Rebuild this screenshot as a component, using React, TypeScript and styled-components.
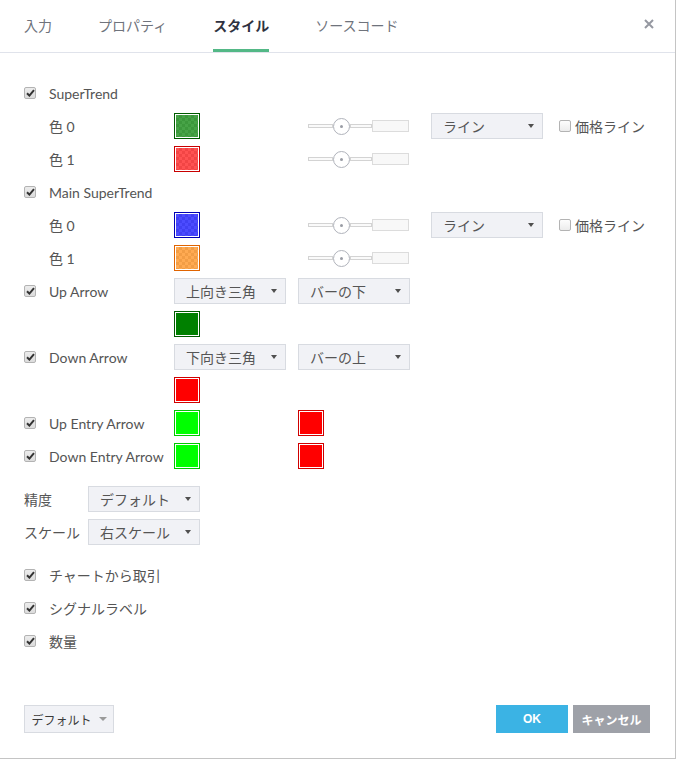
import React from "react";
import styled, { createGlobalStyle } from "styled-components";

const GlobalStyle = createGlobalStyle`
  html, body {
    margin: 0;
    padding: 0;
    background: #fff;
    overflow: hidden;
  }
  body {
    font-family: Lato, "Noto Sans CJK JP", sans-serif;
  }
`;

const Dialog = styled.div`
  box-sizing: border-box;
  width: 676px;
  height: 759px;
  border-right: 1px solid #c4c4c4;
  border-bottom: 1px solid #c4c4c4;
  display: flex;
  flex-direction: column;
  background: #fff;
  color: #555;
  font-size: 14px;
`;

const Header = styled.div`
  height: 52px;
  border-bottom: 1px solid #e0e3eb;
  display: flex;
  justify-content: space-between;
  padding: 0 21px 0 24px;
`;

const Tabs = styled.div`
  display: flex;
  gap: 46px;
`;

const Tab = styled.div<{ $active?: boolean }>`
  box-sizing: border-box;
  display: flex;
  align-items: center;
  padding-top: 1px;
  border-bottom: 3px solid ${(p) => (p.$active ? "#53b886" : "transparent")};
  font-family: "Noto Sans CJK JP", sans-serif;
  font-size: 14px;
  font-weight: ${(p) => (p.$active ? 700 : 400)};
  color: ${(p) => (p.$active ? "#2f3241" : "#6f737c")};
`;

const Close = styled.div`
  display: flex;
  align-items: center;
  padding-bottom: 5px;
`;

const Content = styled.div`
  flex: 1;
  padding: 27px 24px 0 24px;
`;

// vertical margins collapse between rows, so $top is the full gap
const Row = styled.div<{ $top?: number }>`
  display: flex;
  align-items: center;
  height: 26px;
  margin-bottom: 7px;
  margin-top: ${(p) => p.$top ?? 0}px;
`;

const CheckCell = styled.div`
  width: 25px;
  flex: none;
  display: flex;
  align-items: center;
`;

const Label = styled.div<{ $w?: number }>`
  width: ${(p) => p.$w ?? 125}px;
  flex: none;
  white-space: nowrap;
  font-size: 14px;
  color: #555;
`;

const Box = styled.span<{ $checked?: boolean }>`
  box-sizing: border-box;
  width: 12px;
  height: 12px;
  border: 1px solid #b3b3b3;
  border-radius: 2px;
  background: ${(p) =>
    p.$checked
      ? "linear-gradient(#ececec, #dcdcdc)"
      : "linear-gradient(#fdfdfd, #ececec)"};
  display: inline-flex;
  align-items: center;
  justify-content: center;
  flex: none;
`;

const Swatch = styled.div<{ $border: string; $ml?: number }>`
  box-sizing: border-box;
  width: 26px;
  height: 26px;
  border: 1px solid ${(p) => p.$border};
  padding: 1px;
  background: #fff;
  flex: none;
  margin-left: ${(p) => p.$ml ?? 0}px;
`;

const Fill = styled.div<{ $color: string; $checker?: boolean }>`
  width: 100%;
  height: 100%;
  background: ${(p) =>
    p.$checker
      ? `linear-gradient(${p.$color}, ${p.$color}), repeating-conic-gradient(#d6d6d6 0 25%, #fff 0 50%) 0 0 / 6px 6px`
      : p.$color};
`;

const SliderWrap = styled.div`
  display: flex;
  align-items: center;
  margin-left: 108px;
  width: 101px;
  flex: none;
`;

const Track = styled.div<{ $w: number }>`
  box-sizing: border-box;
  width: ${(p) => p.$w}px;
  height: 4px;
  border: 1px solid #d3d3d3;
  background: #fafafa;
`;

const Knob = styled.div`
  box-sizing: border-box;
  width: 17px;
  height: 17px;
  border-radius: 50%;
  border: 1px solid #b0b3bb;
  background: #fff;
  display: flex;
  align-items: center;
  justify-content: center;
  flex: none;
  &::after {
    content: "";
    width: 3px;
    height: 3px;
    border-radius: 50%;
    background: #9a9da5;
  }
`;

const TrackEnd = styled.div`
  box-sizing: border-box;
  width: 37px;
  height: 12px;
  border: 1px solid #dcdcdc;
  background: #f8f8f8;
`;

const SelectBox = styled.div<{ $w?: number; $ml?: number }>`
  box-sizing: border-box;
  width: ${(p) => p.$w ?? 112}px;
  height: 26px;
  margin-left: ${(p) => p.$ml ?? 0}px;
  background: #f1f2f6;
  border: 1px solid #d8dbe1;
  display: flex;
  align-items: center;
  justify-content: space-between;
  padding: 0 8px 0 11px;
  font-size: 14px;
  color: #555;
  flex: none;
  white-space: nowrap;
`;

const Caret = styled.span<{ $color?: string; $size?: number }>`
  width: 0;
  height: 0;
  border-left: ${(p) => p.$size ?? 3.5}px solid transparent;
  border-right: ${(p) => p.$size ?? 3.5}px solid transparent;
  border-top: ${(p) => (p.$size ?? 3.5) + 0.5}px solid ${(p) => p.$color ?? "#4f4f4f"};
`;

const PriceLine = styled.label`
  display: flex;
  align-items: center;
  gap: 4px;
  margin-left: 16px;
  font-size: 14px;
  white-space: nowrap;
`;

const Footer = styled.div`
  display: flex;
  justify-content: space-between;
  align-items: center;
  padding: 0 25px 25px 24px;
`;

const DefaultButton = styled.div`
  box-sizing: border-box;
  width: 90px;
  height: 28px;
  background: #f1f2f6;
  border: 1px solid #d8dbe1;
  display: flex;
  align-items: center;
  justify-content: center;
  gap: 7px;
  font-family: "Noto Sans CJK JP", sans-serif;
  font-size: 12px;
  color: #3a3a3a;
`;

const Buttons = styled.div`
  display: flex;
  gap: 5px;
`;

const Button = styled.div<{ $bg: string; $w: number }>`
  width: ${(p) => p.$w}px;
  height: 28px;
  background: ${(p) => p.$bg};
  color: #fff;
  font-family: "Liberation Sans", "Noto Sans CJK JP", sans-serif;
  font-weight: 700;
  font-size: 12px;
  display: flex;
  align-items: center;
  justify-content: center;
`;

const CheckMark = () => (
  <svg width="9" height="8" viewBox="0 0 9 8">
    <path d="M1 4.2 L3.4 6.6 L8 1.2" fill="none" stroke="#333" strokeWidth="2" />
  </svg>
);

const Check = ({ checked = true }: { checked?: boolean }) => (
  <Box $checked={checked}>{checked && <CheckMark />}</Box>
);

const Slider = () => (
  <SliderWrap>
    <Track $w={25} />
    <Knob />
    <Track $w={22} />
    <TrackEnd />
  </SliderWrap>
);

const Select = ({ children, w, ml }: { children: React.ReactNode; w?: number; ml?: number }) => (
  <SelectBox $w={w} $ml={ml}>
    <span>{children}</span>
    <Caret />
  </SelectBox>
);

type ColorRowProps = {
  label: string;
  border: string;
  color: string;
  withLine?: boolean;
};

const ColorRow = ({ label, border, color, withLine }: ColorRowProps) => (
  <Row>
    <CheckCell />
    <Label>{label}</Label>
    <Swatch $border={border}>
      <Fill $color={color} $checker />
    </Swatch>
    <Slider />
    {withLine && (
      <>
        <Select ml={22}>ライン</Select>
        <PriceLine>
          <Check checked={false} />
          価格ライン
        </PriceLine>
      </>
    )}
  </Row>
);

const App = () => {
  return (
    <Dialog>
      <GlobalStyle />
      <Header>
        <Tabs>
          <Tab>入力</Tab>
          <Tab>プロパティ</Tab>
          <Tab $active>スタイル</Tab>
          <Tab>ソースコード</Tab>
        </Tabs>
        <Close>
          <svg width="10" height="10" viewBox="0 0 10 10">
            <path d="M1 1 L9 9 M9 1 L1 9" stroke="#9598a1" strokeWidth="2" />
          </svg>
        </Close>
      </Header>

      <Content>
        <Row>
          <CheckCell><Check /></CheckCell>
          <Label>SuperTrend</Label>
        </Row>
        <ColorRow label="色 0" border="#005c00" color="rgba(0,128,0,0.72)" withLine />
        <ColorRow label="色 1" border="#c80000" color="rgba(255,0,0,0.68)" />

        <Row>
          <CheckCell><Check /></CheckCell>
          <Label>Main SuperTrend</Label>
        </Row>
        <ColorRow label="色 0" border="#0000b4" color="rgba(0,0,255,0.7)" withLine />
        <ColorRow label="色 1" border="#e06400" color="rgba(255,130,0,0.68)" />

        <Row>
          <CheckCell><Check /></CheckCell>
          <Label>Up Arrow</Label>
          <Select>上向き三角</Select>
          <Select ml={12}>バーの下</Select>
        </Row>
        <Row>
          <CheckCell />
          <Label />
          <Swatch $border="#005c00"><Fill $color="#008000" /></Swatch>
        </Row>

        <Row>
          <CheckCell><Check /></CheckCell>
          <Label>Down Arrow</Label>
          <Select>下向き三角</Select>
          <Select ml={12}>バーの上</Select>
        </Row>
        <Row>
          <CheckCell />
          <Label />
          <Swatch $border="#d00000"><Fill $color="#ff0000" /></Swatch>
        </Row>

        <Row>
          <CheckCell><Check /></CheckCell>
          <Label>Up Entry Arrow</Label>
          <Swatch $border="#00c800"><Fill $color="#00ff00" /></Swatch>
          <Swatch $border="#d00000" $ml={98}><Fill $color="#ff0000" /></Swatch>
        </Row>
        <Row>
          <CheckCell><Check /></CheckCell>
          <Label>Down Entry Arrow</Label>
          <Swatch $border="#00c800"><Fill $color="#00ff00" /></Swatch>
          <Swatch $border="#d00000" $ml={98}><Fill $color="#ff0000" /></Swatch>
        </Row>

        <Row $top={17}>
          <Label $w={64}>精度</Label>
          <Select>デフォルト</Select>
        </Row>
        <Row>
          <Label $w={64}>スケール</Label>
          <Select>右スケール</Select>
        </Row>

        <Row $top={17}>
          <CheckCell><Check /></CheckCell>
          <Label>チャートから取引</Label>
        </Row>
        <Row>
          <CheckCell><Check /></CheckCell>
          <Label>シグナルラベル</Label>
        </Row>
        <Row>
          <CheckCell><Check /></CheckCell>
          <Label>数量</Label>
        </Row>
      </Content>

      <Footer>
        <DefaultButton>
          デフォルト
          <Caret $color="#9a9a9a" $size={4} />
        </DefaultButton>
        <Buttons>
          <Button $bg="#3bb3e4" $w={72}>OK</Button>
          <Button $bg="#9ea1a8" $w={77}>キャンセル</Button>
        </Buttons>
      </Footer>
    </Dialog>
  );
};

export default App;
